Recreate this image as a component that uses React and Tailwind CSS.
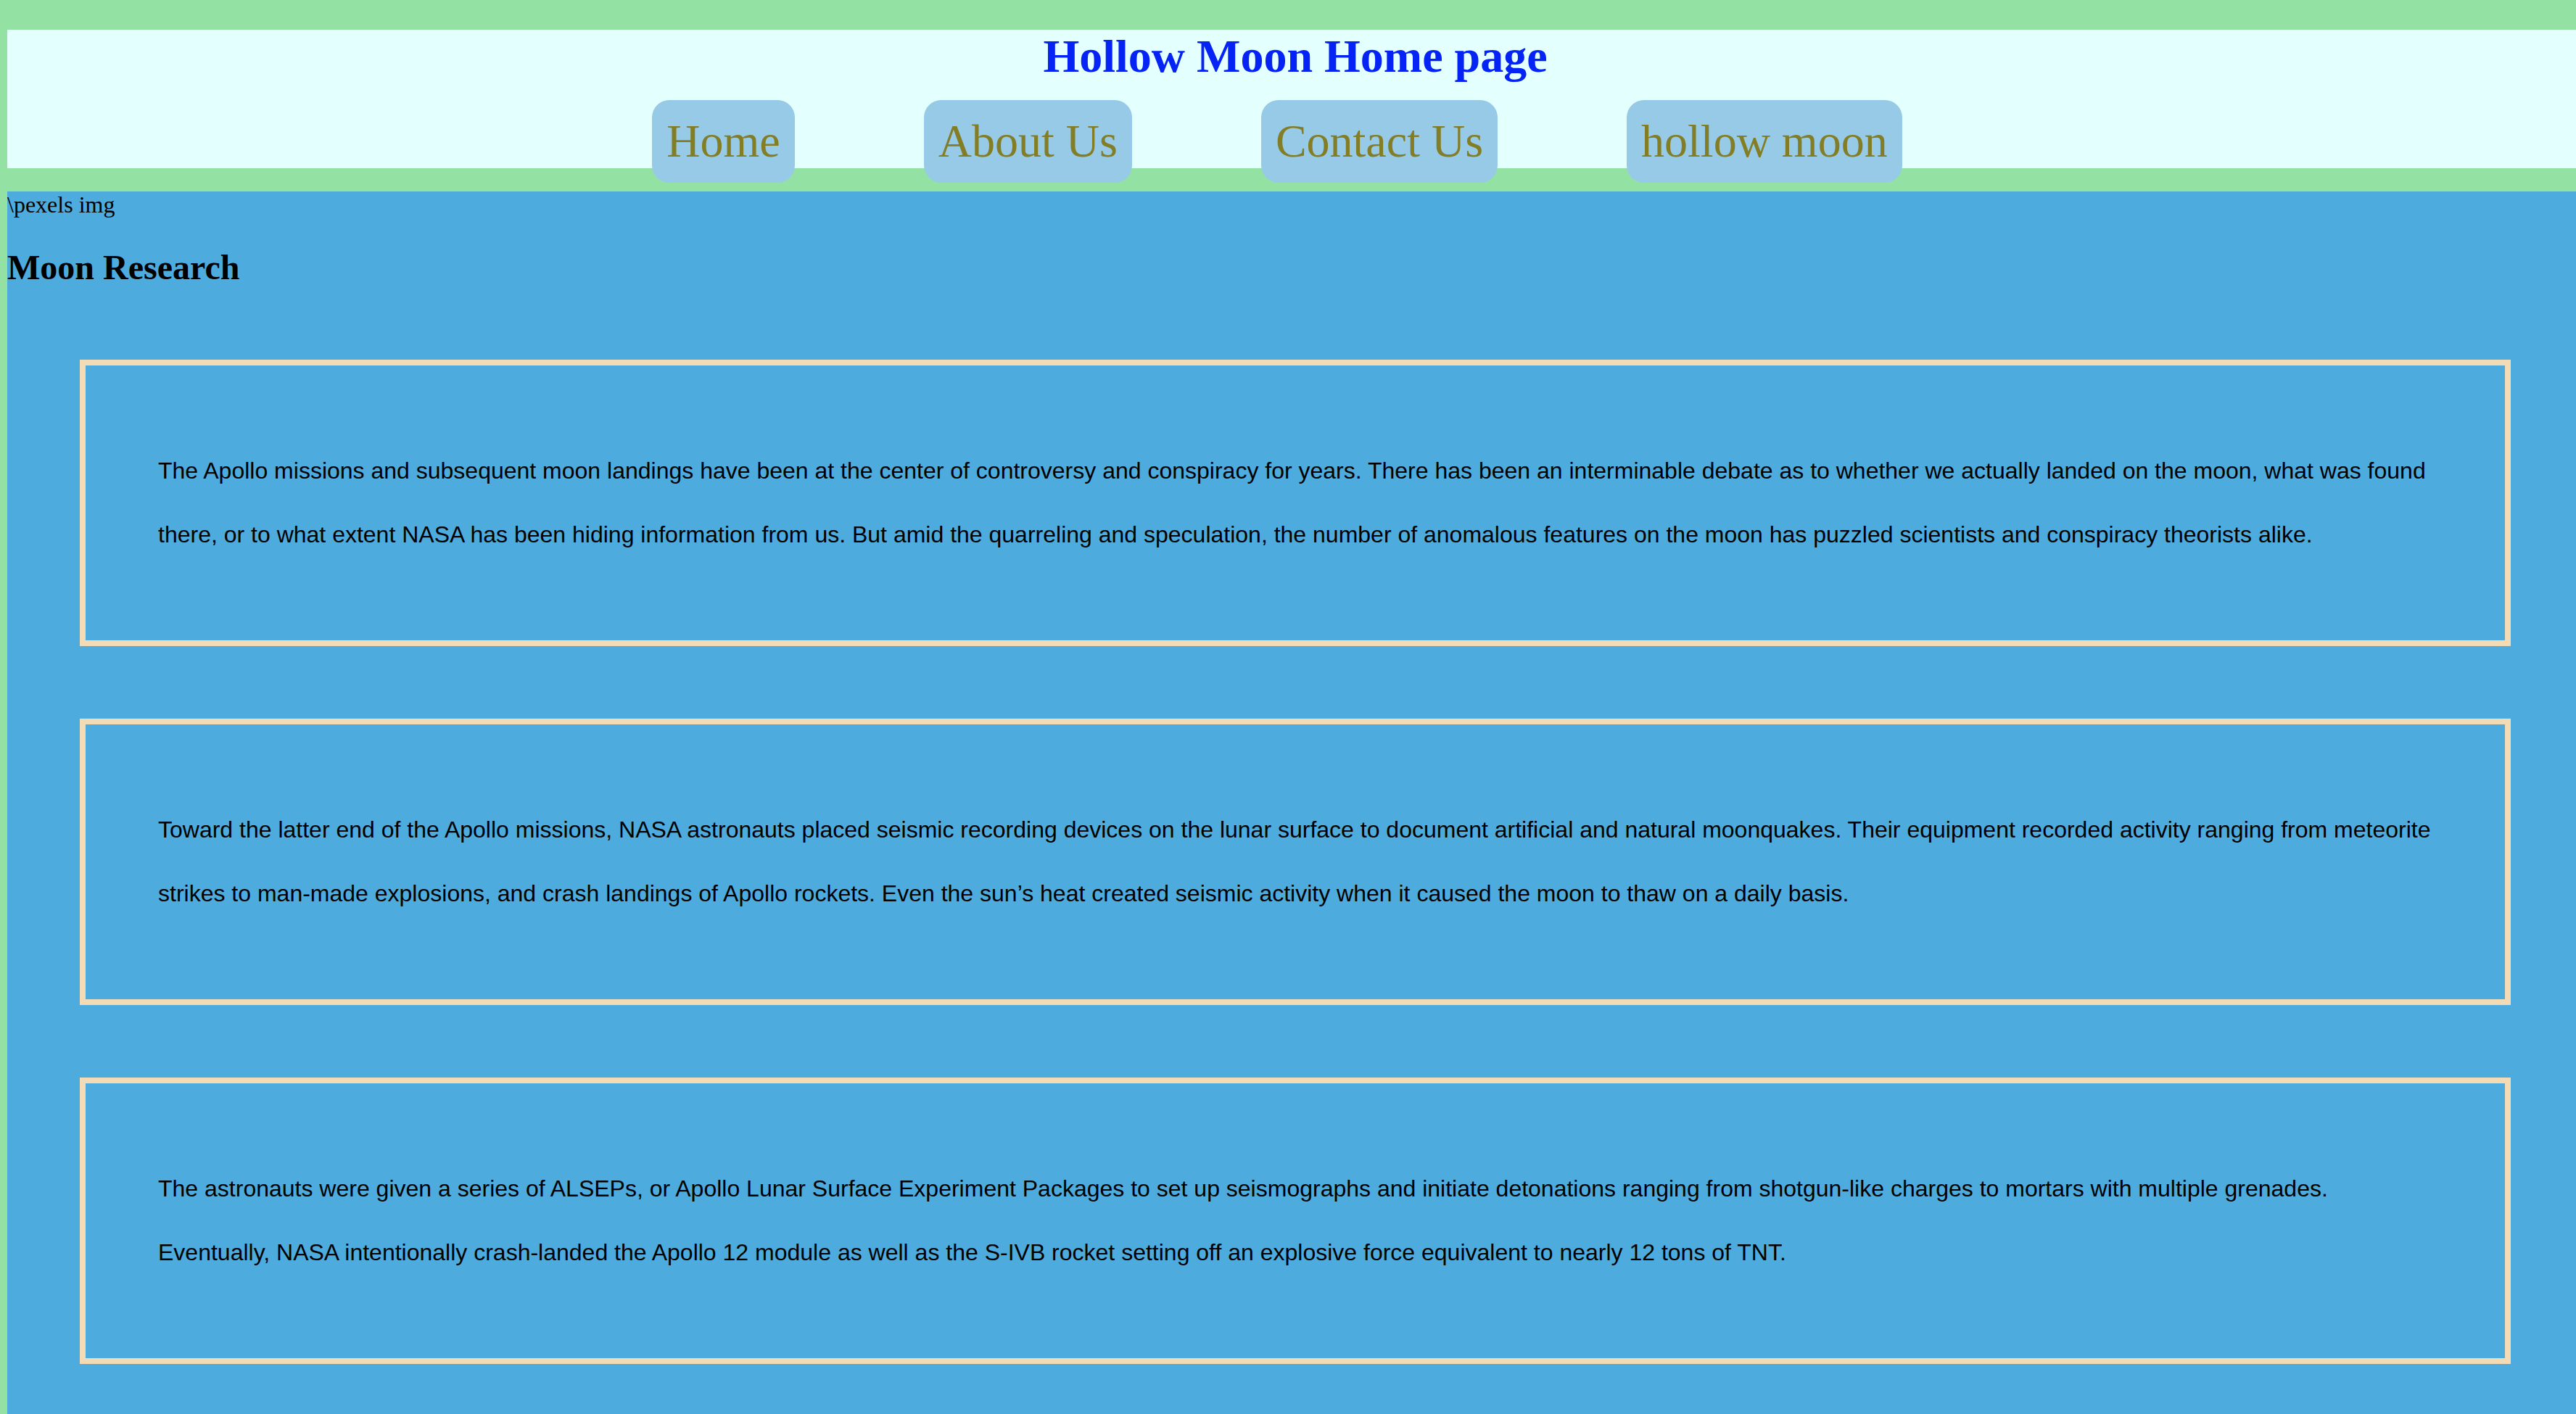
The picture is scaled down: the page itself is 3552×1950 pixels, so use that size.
const links = ["Home", "About Us", "Contact Us", "hollow moon"];

const paragraphs = [
  "The Apollo missions and subsequent moon landings have been at the center of controversy and conspiracy for years. There has been an interminable debate as to whether we actually landed on the moon, what was found there, or to what extent NASA has been hiding information from us. But amid the quarreling and speculation, the number of anomalous features on the moon has puzzled scientists and conspiracy theorists alike.",
  "Toward the latter end of the Apollo missions, NASA astronauts placed seismic recording devices on the lunar surface to document artificial and natural moonquakes. Their equipment recorded activity ranging from meteorite strikes to man-made explosions, and crash landings of Apollo rockets. Even the sun\u2019s heat created seismic activity when it caused the moon to thaw on a daily basis.",
  "The astronauts were given a series of ALSEPs, or Apollo Lunar Surface Experiment Packages to set up seismographs and initiate detonations ranging from shotgun-like charges to mortars with multiple grenades. Eventually, NASA intentionally crash-landed the Apollo 12 module as well as the S-IVB rocket setting off an explosive force equivalent to nearly 12 tons of TNT.",
];

const App = () => {
  return (
    <div className="h-screen overflow-hidden bg-[#93e2a3] pt-[41px] pl-[10px] flex flex-col font-['Liberation_Serif',serif] text-black">
      <header className="h-[191px] shrink-0 bg-[#e3fffe]">
        <h1 className="pl-[10px] text-center text-[64px] font-bold leading-[normal] text-[#0523f5]">
          Hollow Moon Home page
        </h1>
        <nav className="mt-[23px] flex justify-center gap-[178px] pr-[40px]">
          {links.map((link) => (
            <a
              key={link}
              href="#"
              className="p-[20px] rounded-[24px] bg-[#96cae7] text-[64px] leading-[normal] text-[#837d25] whitespace-nowrap"
            >
              {link}
            </a>
          ))}
        </nav>
      </header>

      <main className="mt-[32px] flex-1 bg-[#4eabde]">
        <p className="text-[32px] leading-[normal]">{"\\pexels img"}</p>
        <h2 className="mt-[40px] text-[48px] font-bold leading-[normal]">Moon Research</h2>

        <div className="mt-[100px] ml-[100px] mr-[90px] flex flex-col gap-[100px]">
          {paragraphs.map((text, i) => (
            <div
              key={i}
              className="border-[8px] border-[#f3dcb5] px-[100px] pt-[101px] pb-[102px]"
            >
              <p className="font-['Liberation_Sans',Arial,sans-serif] text-[32px] leading-[88px]">
                {text}
              </p>
            </div>
          ))}
        </div>
      </main>
    </div>
  );
};

export default App;
